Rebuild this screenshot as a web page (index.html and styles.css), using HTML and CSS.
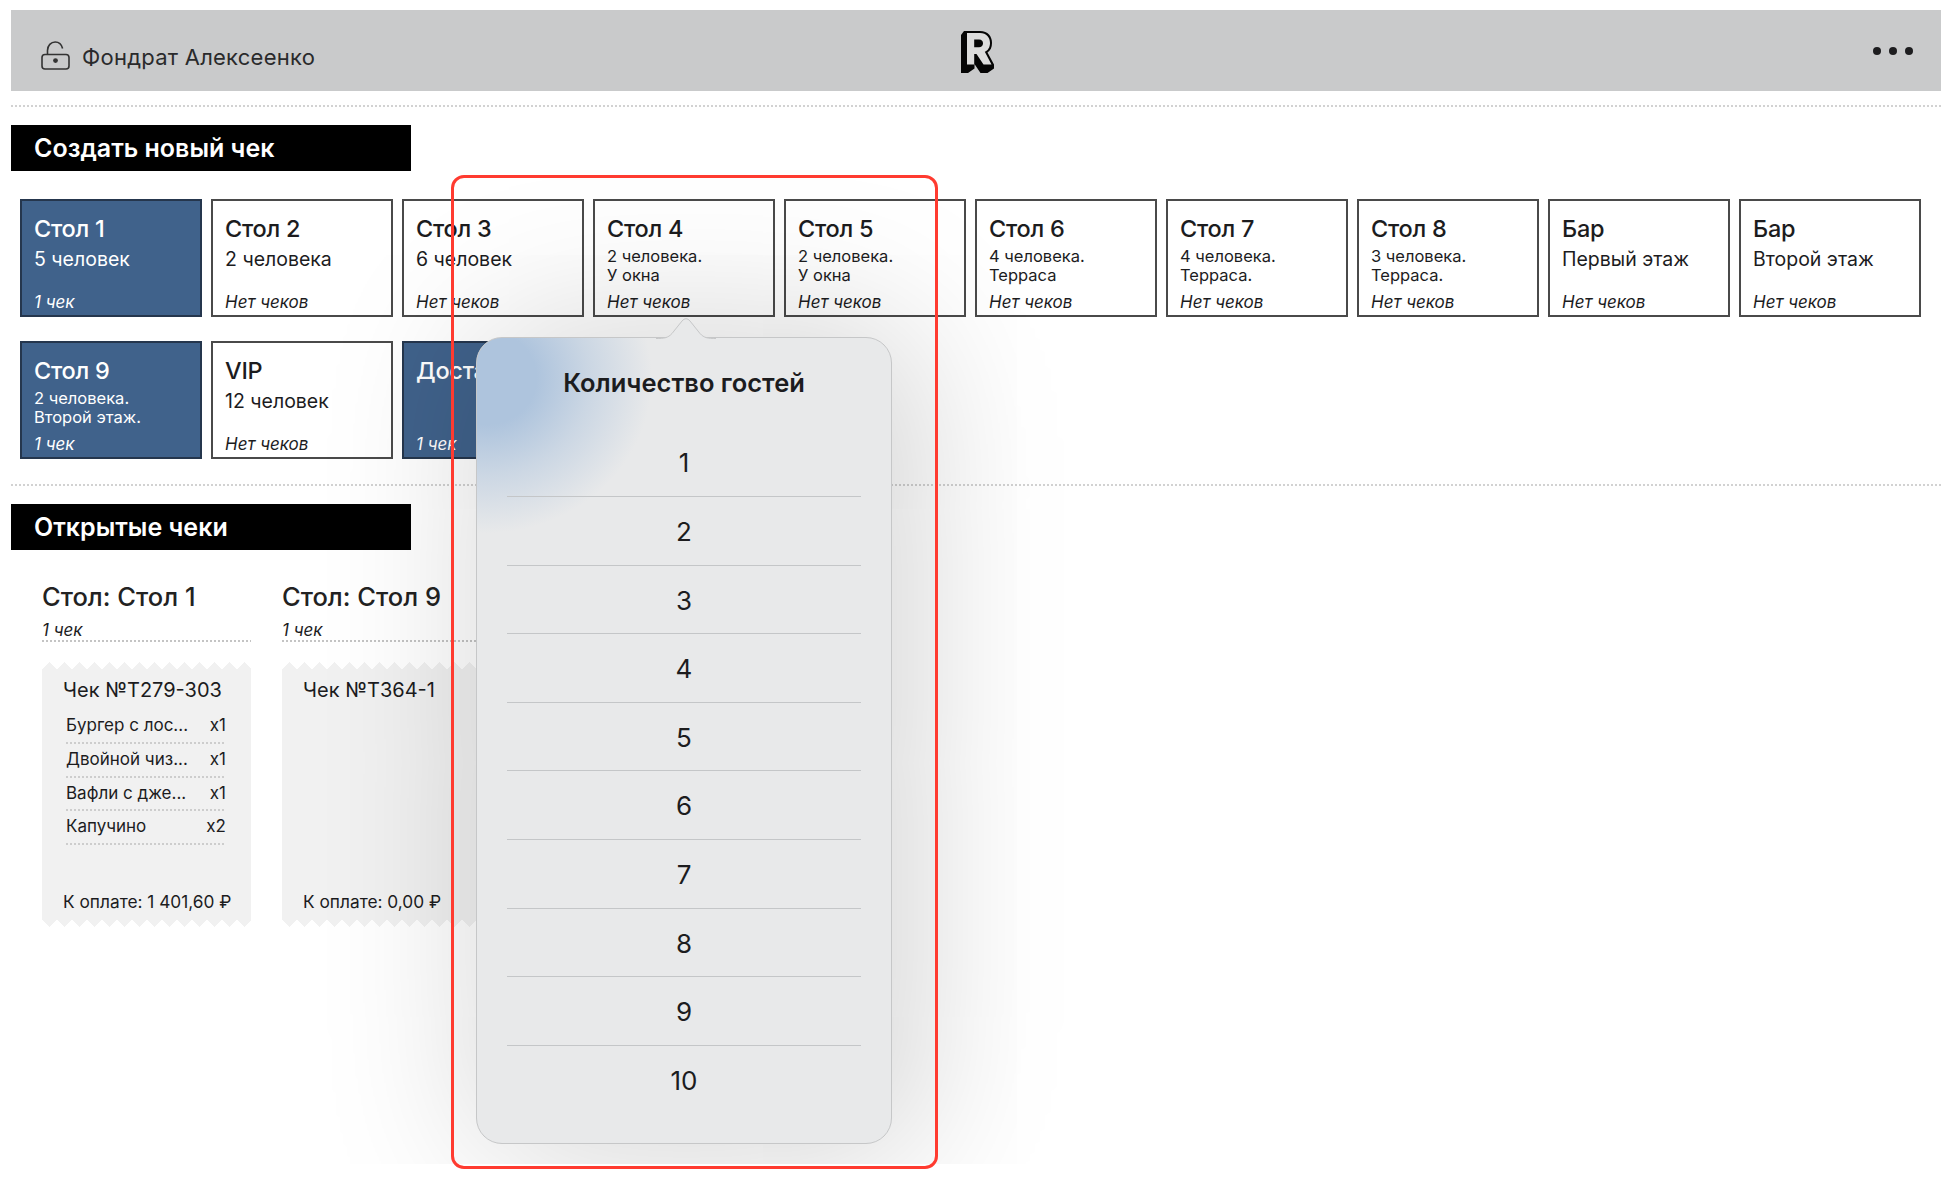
FILE: index.html
```html
<!DOCTYPE html>
<html lang="ru">
<head>
<meta charset="utf-8">
<title>Количество гостей</title>
<link rel="stylesheet" href="styles.css">
</head>
<body>
<div class="page">
  <div class="canvas">
  <header class="topbar">
    <div class="user">
      <svg class="lock" viewBox="0 0 30 29" aria-hidden="true">
        <path d="M6.5 13.5V9.5C6.5 4.5 10 1 14.2 1C18 1 20.6 3.6 21.6 7.5" />
        <rect x="1" y="13.5" width="27" height="14.5" rx="3" />
        <circle cx="14.5" cy="19.6" r="2.4" class="lock-dot" />
      </svg>
      <span>Фондрат Алексеенко</span>
    </div>
    <svg class="logo" viewBox="0 0 34 42" aria-hidden="true">
      <path class="logo-back" d="M4 0H20C28 0 32 5.500 32 12C32 16.500 30.500 19.500 27.500 21.500L34 33.500V37.500L27.500 42H20.500L14.500 33V37.500L8 42H1V4Z" />
      <path class="logo-face" d="M7 2H20C26.500 2 30 6.500 30 12C30 16.500 27.800 19.500 24.800 20.800L31.500 33.500H23.500L16.500 23H14.200V33.500H7Z" />
      <path class="logo-back" d="M14.200 8.500H19C21.800 8.500 23 10.300 23 12.300C23 14.800 21.200 16.300 19 16.300H14.200Z" />
    </svg>
    <div class="dots"><i></i><i></i><i></i></div>
  </header>

  <div class="rule rule-top"></div>

  <h2 class="section first">Создать новый чек</h2>
  <div class="tiles">
    <div class="tile on"><b>Стол 1</b><span>5 человек</span><em>1 чек</em></div>
    <div class="tile"><b>Стол 2</b><span>2 человека</span><em>Нет чеков</em></div>
    <div class="tile"><b>Стол 3</b><span>6 человек</span><em>Нет чеков</em></div>
    <div class="tile"><b>Стол 4</b><small>2 человека.<br>У окна</small><em>Нет чеков</em></div>
    <div class="tile"><b>Стол 5</b><small>2 человека.<br>У окна</small><em>Нет чеков</em></div>
    <div class="tile"><b>Стол 6</b><small>4 человека.<br>Терраса</small><em>Нет чеков</em></div>
    <div class="tile"><b>Стол 7</b><small>4 человека.<br>Терраса.</small><em>Нет чеков</em></div>
    <div class="tile"><b>Стол 8</b><small>3 человека.<br>Терраса.</small><em>Нет чеков</em></div>
    <div class="tile"><b>Бар</b><span>Первый этаж</span><em>Нет чеков</em></div>
    <div class="tile"><b>Бар</b><span>Второй этаж</span><em>Нет чеков</em></div>
    <div class="tile on"><b>Стол 9</b><small>2 человека.<br>Второй этаж.</small><em>1 чек</em></div>
    <div class="tile"><b>VIP</b><span>12 человек</span><em>Нет чеков</em></div>
    <div class="tile on"><b>Доставка</b><em>1 чек</em></div>
  </div>

  <div class="rule rule-mid"></div>

  <h2 class="section">Открытые чеки</h2>
  <div class="checks">
    <section class="col">
      <h3>Стол: Стол 1</h3>
      <p class="count">1 чек</p>
      <div class="receipt">
        <div class="r-title">Чек №Т279-303</div>
        <ul class="r-items">
          <li><span>Бургер с лос...</span><span>x1</span></li>
          <li><span>Двойной чиз...</span><span>x1</span></li>
          <li><span>Вафли с дже...</span><span>x1</span></li>
          <li><span>Капучино</span><span>x2</span></li>
        </ul>
        <div class="r-total">К оплате: 1 401,60 ₽</div>
      </div>
    </section>
    <section class="col">
      <h3>Стол: Стол 9</h3>
      <p class="count">1 чек</p>
      <div class="receipt">
        <div class="r-title">Чек №Т364-1</div>
        <ul class="r-items"></ul>
        <div class="r-total">К оплате: 0,00 ₽</div>
      </div>
    </section>
  </div>

  <aside class="popover">
    <svg class="arrow" viewBox="0 0 60 22" aria-hidden="true">
      <path class="arrow-fill" d="M0 21.500C8 21.500 12 21 16 16.500L26 4C28.500 1 31.500 1 34 4L44 16.500C48 21 52 21.500 60 21.500V22H0Z" />
      <path class="arrow-line" d="M0 21.500C8 21.500 12 21 16 16.500L26 4C28.500 1 31.500 1 34 4L44 16.500C48 21 52 21.500 60 21.500" />
    </svg>
    <h4>Количество гостей</h4>
    <ol class="guests">
      <li>1</li><li>2</li><li>3</li><li>4</li><li>5</li>
      <li>6</li><li>7</li><li>8</li><li>9</li><li>10</li>
    </ol>
  </aside>
  </div>

  <div class="callout"></div>
</div>
</body>
</html>
```

FILE: styles.css
```css
* { box-sizing: border-box; }
html, body { margin: 0; padding: 0; background: #fff; }
body { font-family: Inter, "Noto Sans", "Liberation Sans", sans-serif; color: #1c1c1e; }

.page { position: relative; height: 1184px; overflow: hidden; }
.canvas { position: relative; height: 1164px; overflow: hidden; padding-top: 10px; }

.topbar {
  height: 81px; margin: 0 5px 0 11px; padding: 0 28px 0 30px;
  background: #c9cacb; display: grid; grid-template-columns: 1fr auto 1fr; align-items: center;
}
.user { display: flex; align-items: center; gap: 11px; font-size: 22px; color: #2a2a2c; padding-top: 12px; letter-spacing: .25px; }
.lock { width: 30px; height: 29px; fill: none; stroke: #333; stroke-width: 1.6; margin-top: -2px; }
.lock-dot { fill: #333; stroke: none; }
.logo { width: 34px; height: 42px; transform: translateY(1px); }
.logo-back { fill: #050505; }
.logo-face { fill: #dcdcdc; }
.dots { display: flex; justify-content: flex-end; gap: 8px; }
.dots i { width: 8px; height: 8px; border-radius: 50%; background: #1d1d1f; }

.rule { height: 2px; margin: 0 5px 0 11px; background: linear-gradient(90deg, #d2d2d2 2px, transparent 0) 0 0 / 4px 2px repeat-x; }
.rule-top { margin-top: 14px; }
.rule-mid { margin-top: 25px; }

.section {
  width: 400px; height: 46px; margin: 18px 0 0 11px; padding: 0 23px;
  background: #000; color: #fff; font-size: 25px; font-weight: 600; line-height: 46px;
}
.section.first { margin-top: 18px; }

.tiles { display: grid; grid-template-columns: repeat(10, 182px); grid-auto-rows: 118px; gap: 24px 9px; margin: 28px 0 0 20px; }
.tile {
  display: flex; flex-direction: column; padding: 13px 12px 2px; background: #fff;
  border: 2px solid #4a4a4a; color: #1c1c1e; overflow: hidden; white-space: nowrap;
}
.tile b { font-size: 23.500px; font-weight: 500; line-height: 30px; letter-spacing: -.25px; }
.tile span { font-size: 19.500px; line-height: 24px; margin-top: 3px; }
.tile small { font-size: 16.500px; line-height: 19px; margin-top: 2.500px; }
.tile em { margin-top: auto; font-size: 17px; line-height: 22px; }
.tile.on { background: #40628b; color: #fff; border-color: #25364d; }

.checks { display: flex; gap: 31px; margin: 30px 0 0 42px; }
.col { width: 209px; }
.col h3 { margin: 0; font-size: 25.500px; font-weight: 500; line-height: 34px; white-space: nowrap; color: #222; }
.count { margin: 0; padding: 5px 0 0; font-size: 17px; font-style: italic; line-height: 22px; height: 28px; background: linear-gradient(90deg, #c4c4c4 2px, transparent 0) 0 100% / 4px 2px repeat-x; }
.receipt { position: relative; height: 265px; margin-top: 20px; padding: 15px 0 0 21px; background: #f1f1f1; display: flex; flex-direction: column; }
.receipt::before, .receipt::after { content: ""; position: absolute; left: 0; right: 0; height: 7px; background-size: 15px 7px; background-repeat: repeat-x; }
.receipt::before { top: 0; background-image: conic-gradient(from 135deg at 50% 0, #f1f1f1 90deg, #fff 0); }
.receipt::after { bottom: 0; background-image: conic-gradient(from -45deg at 50% 100%, #f1f1f1 90deg, #fff 0); }
.r-title { font-size: 20px; line-height: 26px; white-space: nowrap; }
.r-items { list-style: none; margin: 7px 0 0 3px; padding: 0; width: 160px; flex: 1; font-size: 17px; }
.r-items li { display: flex; justify-content: space-between; height: 33.800px; line-height: 30px; background: linear-gradient(90deg, #cdcdcd 2px, transparent 0) 0 100% / 4px 2px repeat-x; white-space: nowrap; }
.r-total { position: relative; z-index: 1; font-size: 17.300px; line-height: 24px; height: 37px; white-space: nowrap; }

.popover {
  position: absolute; left: 476px; top: 337px; width: 416px; height: 807px; z-index: 2;
  padding: 0 30px; border: 1px solid #c6c7c8; border-radius: 26px;
  background-color: #e8e9ea;
  background-image: radial-gradient(ellipse 165px 155px at 10px 40px, #aec4dd 30%, rgba(174,196,221,.5) 62%, rgba(174,196,221,0) 100%);
  box-shadow: 15px 0 160px 10px rgba(0,0,0,.18);
}
.arrow { position: absolute; left: 179px; top: -21px; width: 60px; height: 22px; overflow: visible; }
.arrow-fill { fill: #e8e9ea; }
.arrow-line { fill: none; stroke: #c6c7c8; stroke-width: 1; }
.popover h4 { margin: 0; height: 90.400px; padding-top: 25px; text-align: center; font-size: 25.500px; font-weight: 600; line-height: 40px; color: #1c1c1e; }
.guests { list-style: none; margin: 0; padding: 0; }
.guests li { height: 68.600px; line-height: 69px; text-align: center; font-size: 26px; color: #1c1c1e; border-bottom: 1px solid #c4c6c8; }
.guests li:last-child { border-bottom: 0; }

.callout { position: absolute; left: 451px; top: 175px; width: 487px; height: 994px; z-index: 3; border: 3.500px solid #ff3b30; border-radius: 13px; }
```
